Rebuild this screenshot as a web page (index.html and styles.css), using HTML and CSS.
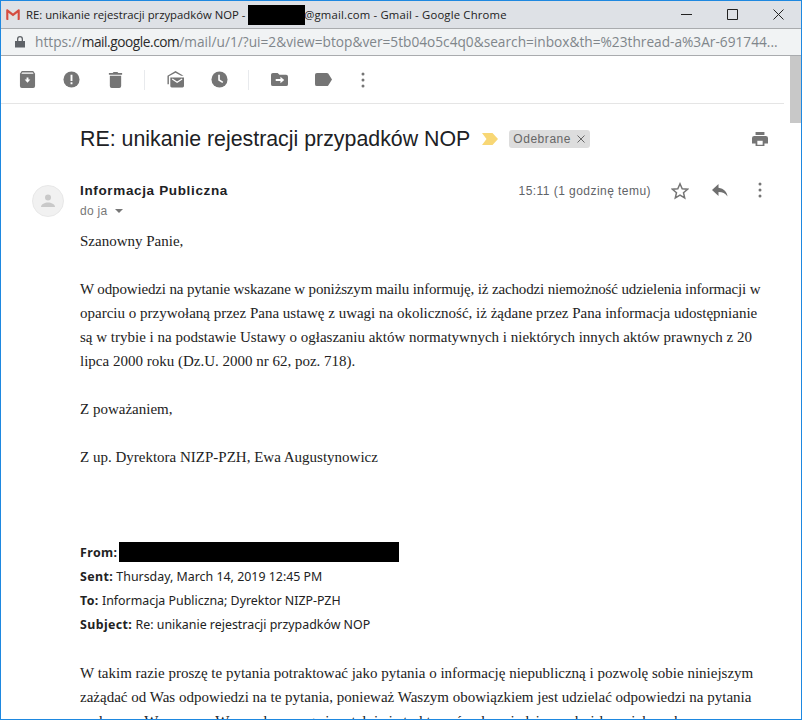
FILE: index.html
```html
<!DOCTYPE html>
<html lang="pl">
<head>
<meta charset="utf-8">
<title>RE: unikanie rejestracji przypadków NOP - Gmail</title>
<link rel="stylesheet" href="styles.css">
</head>
<body>
<div class="window">
  <header class="titlebar">
    <svg class="gmail" width="14" height="11" viewBox="0 0 16 13"><path fill="#e0e0e0" d="M1 2h14v10H1z"/><path fill="#d54c3f" d="M0 1.500C0 .6 1.200 0 2 .6L8 5.200 14 .6c.8-.6 2 0 2 .9V12c0 .6-.4 1-1 1h-1.500V4.500L8 8.700 2.500 4.500V13H1c-.6 0-1-.4-1-1z"/></svg>
    <div class="title"><span>RE: unikanie rejestracji przypadków NOP - </span><span class="redact redact-title"></span><span class="title-rest">@gmail.com - Gmail - Google Chrome</span></div>
    <div class="winbtns">
      <svg width="11" height="11" viewBox="0 0 11 11"><path d="M0 5.500h11" stroke="#222" fill="none"/></svg>
      <svg width="11" height="11" viewBox="0 0 11 11"><path d="M.5.500h10v10H.5z" stroke="#222" fill="none"/></svg>
      <svg width="11" height="11" viewBox="0 0 11 11"><path d="M.5.500l10 10M10.500.500l-10 10" stroke="#222" fill="none"/></svg>
    </div>
  </header>
  <div class="urlbar">
    <svg width="10" height="12" viewBox="0 0 10 12"><path fill="#5f6368" d="M0 5h10v6.500H0zM2 5V3a3 3 0 0 1 6 0v2H6.700V3a1.700 1.700 0 0 0-3.400 0v2z"/></svg>
    <div class="url"><span class="dim">https://</span><span class="host">mail.google.com</span><span class="dim">/mail/u/1/?ui=2&amp;view=btop&amp;ver=5tb04o5c4q0&amp;search=inbox&amp;th=%23thread-a%3Ar-691744...</span></div>
  </div>
  <div class="viewport">
    <main class="page">
      <nav class="toolbar">
        <div class="tbgroup">
          <svg class="ic" viewBox="0 0 18 18"><path d="M1 3l2-3h12l2 3v13a2 2 0 0 1-2 2H3a2 2 0 0 1-2-2z"/><path fill="#fff" d="M2.500 3l1-1.500h11l1 1.500zM6 9h2V7h2v2h2l-3 3.500z"/></svg>
          <svg class="ic" viewBox="0 0 18 18"><circle cx="9" cy="9" r="8.500"/><path fill="#fff" d="M8 4h2v6.500H8zM8 12h2v2H8z"/></svg>
          <svg class="ic" viewBox="0 0 18 18"><path d="M2 2h4l1-1h4l1 1h4v2H2zM3 5h12v11a2 2 0 0 1-2 2H5a2 2 0 0 1-2-2z"/></svg>
        </div>
        <span class="sep"></span>
        <div class="tbgroup tbmail">
          <svg class="ic" viewBox="0 0 18 18"><path d="M9 0l8.500 5H15L9 1.800 2 5.500V14H.5V5z"/><path d="M3.500 7h14.500v9a1.500 1.500 0 0 1-1.500 1.500H5A1.500 1.500 0 0 1 3.500 16z"/><path fill="none" stroke="#fff" stroke-width="1.300" d="M5.500 8.500l5.200 3.400 5.300-3.400"/></svg>
          <svg class="ic" viewBox="0 0 18 18"><circle cx="9" cy="9" r="8.500"/><path fill="none" stroke="#fff" stroke-width="1.700" d="M8.500 4v5.500l4 2.500"/></svg>
        </div>
        <span class="sep"></span>
        <div class="tbgroup tbmove">
          <svg class="ic" viewBox="0 0 18 18"><path d="M2 2h5l2 2h7a2 2 0 0 1 2 2v8a2 2 0 0 1-2 2H2a2 2 0 0 1-2-2V4a2 2 0 0 1 2-2z"/><path fill="#fff" d="M5 8.500h5V6l4 3.500-4 3.500v-2.500H5z"/></svg>
          <svg class="ic" viewBox="0 0 18 14"><path d="M2 0h10.500c.7 0 1.300.3 1.700.9L18 7l-3.800 6.100c-.4.600-1 .9-1.700.9H2a2 2 0 0 1-2-2V2a2 2 0 0 1 2-2z"/></svg>
          <svg class="ic dots" viewBox="0 0 4 16"><circle cx="2" cy="2" r="1.500"/><circle cx="2" cy="8" r="1.500"/><circle cx="2" cy="14" r="1.500"/></svg>
        </div>
      </nav>
      <div class="subject">
        <h1>RE: unikanie rejestracji przypadków NOP</h1>
        <svg class="marker" width="16" height="12" viewBox="0 0 16 12"><path fill="#f8d775" d="M0 0h10.500L16 6l-5.500 6H0l4.500-6z"/></svg>
        <span class="chip">Odebrane<svg class="chipx" width="8" height="8" viewBox="0 0 8 8"><path d="M.5.500l7 7M7.500.500l-7 7" stroke="#666" fill="none"/></svg></span>
        <svg class="ic print" viewBox="0 0 18 18"><path d="M4 1h10v3.500H4zM2.500 5.500h13A2.500 2.500 0 0 1 18 8v6h-4v3H4v-3H0V8a2.500 2.500 0 0 1 2.500-2.500z"/><path fill="#fff" d="M6 11h6v4.500H6z"/></svg>
      </div>
      <section class="message">
        <div class="avatar">
          <svg width="14" height="14" viewBox="0 0 14 14"><circle cx="7" cy="3.500" r="3" fill="#c9c9c9"/><path fill="#c9c9c9" d="M0 13c0-3 4-4.500 7-4.500s7 1.500 7 4.500z"/></svg>
        </div>
        <div class="content">
          <div class="msghead">
            <div class="who">
              <div class="sender">Informacja Publiczna</div>
              <div class="recipient">do ja <span class="caret"></span></div>
            </div>
            <div class="time">15:11 (1 godzinę temu)</div>
            <div class="msgactions">
              <svg class="star" width="18" height="18" viewBox="0 0 18 18"><path fill="none" stroke="#757575" stroke-width="1.500" d="M9 1.800l2.200 4.900 5.300.5-4 3.500 1.200 5.200L9 13.200l-4.700 2.700 1.200-5.200-4-3.500 5.300-.5z"/></svg>
              <svg class="reply" width="16" height="14" viewBox="0 0 16 14"><path fill="#6f6f6f" d="M6.500 3.800V0L0 6l6.500 6V8.100c4 0 7 1.300 9 4.400C15 8 12 4.500 6.500 3.800z"/></svg>
              <svg class="ic dots" viewBox="0 0 4 16"><circle cx="2" cy="2" r="1.500"/><circle cx="2" cy="8" r="1.500"/><circle cx="2" cy="14" r="1.500"/></svg>
            </div>
          </div>
          <div class="body">
            <p>Szanowny Panie,</p>
            <p class="fixed"><span class="tight">W odpowiedzi na pytanie wskazane w poniższym mailu informuję, iż zachodzi niemożność udzielenia informacji w</span><br>oparciu o przywołaną przez Pana ustawę z uwagi na okoliczność, iż żądane przez Pana informacja udostępnianie<br>są w trybie i na podstawie Ustawy o ogłaszaniu aktów normatywnych i niektórych innych aktów prawnych z 20<br>lipca 2000 roku (Dz.U. 2000 nr 62, poz. 718).</p>
            <p>Z poważaniem,</p>
            <p>Z up. Dyrektora NIZP-PZH, Ewa Augustynowicz</p>
            <div class="quotehead">
              <div><b>From:</b> <span class="redact redact-from"></span></div>
              <div><b>Sent:</b> Thursday, March 14, 2019 12:45 PM</div>
              <div><b>To:</b> Informacja Publiczna; Dyrektor NIZP-PZH</div>
              <div><b>Subject:</b> Re: unikanie rejestracji przypadków NOP</div>
            </div>
            <p>W takim razie proszę te pytania potraktować jako pytania o informację niepubliczną i pozwolę sobie niniejszym zażądać od Was odpowiedzi na te pytania, ponieważ Waszym obowiązkiem jest udzielać odpowiedzi na pytania podawane Wam przez Was pod rozwagę i rzetelnie je traktować, odpowiadając na każde z nich osobno.</p>
          </div>
        </div>
      </section>
    </main>
    <div class="scrollbar"><div class="thumb"></div></div>
  </div>
</div>
</body>
</html>
```
FILE: styles.css
```css
html, body { margin: 0; padding: 0; height: 100%; overflow: hidden; background: #fff; }
.window { box-sizing: border-box; width: 802px; height: 720px; border: 1px solid #1e88e0; display: flex; flex-direction: column; overflow: hidden; color: #222; }
.titlebar { height: 27px; flex: none; display: flex; align-items: center; background: #dee1e6; padding-left: 5px; font: 11.300px/16px "Open Sans", "Noto Sans", sans-serif; color: #222; }
.gmail { flex: none; margin-right: 6px; }
.title { flex: 1; display: flex; align-items: center; white-space: pre; }
.title-rest { margin-left: -1px; letter-spacing: .18px; }
.redact { display: inline-block; background: #000; }
.redact-title { width: 57px; height: 20px; }
.winbtns { display: flex; gap: 35px; margin-right: 17px; }
.urlbar { height: 28px; flex: none; box-sizing: border-box; border-top: 1px solid #a9abae; border-bottom: 1px solid #a9abae; background: #f1f3f4; display: flex; align-items: center; padding-left: 14px; gap: 10px; font: 13.700px/18px "Open Sans", "Noto Sans", sans-serif; white-space: nowrap; }
.dim { color: #80868b; }
.host { color: #2b2b2b; letter-spacing: -.45px; }
.viewport { flex: 1; display: flex; min-height: 0; }
.page { flex: 1; min-width: 0; overflow: hidden; }
.scrollbar { flex: none; width: 11px; background: #fff; }
.thumb { height: 67px; background: #c8c8c8; }
.ic { fill: #757575; display: block; width: 17px; height: 17px; flex: none; }
.toolbar { height: 48px; box-sizing: border-box; margin-right: 6px; border-bottom: 1px solid #e5e5e5; display: flex; align-items: center; padding-left: 18px; }
.tbgroup { display: flex; align-items: center; gap: 27px; }
.tbmail { margin-left: 1px; gap: 27px; }
.tbmove { margin-left: 1px; }
.tbmove .dots { margin-left: 2px; }
.sep { width: 1px; height: 20px; background: #e8eaed; margin: 0 21px 0 20px; }
.dots { width: 4px; height: 16px; }
.subject { display: flex; align-items: center; padding: 20px 22px 0 79px; height: 30px; }
h1 { margin: 0; font: 400 21.350px/28px "Liberation Sans", Arial, sans-serif; color: #202124; white-space: nowrap; }
.marker { margin-left: 12px; flex: none; }
.chip { margin-left: 11px; background: #ddd; border-radius: 3px; padding: 0 5px 0 4px; height: 18px; display: flex; align-items: center; gap: 6px; font: 12px/18px "Liberation Sans", Arial, sans-serif; letter-spacing: .55px; color: #666; white-space: nowrap; }
.chipx { flex: none; }
.print { margin-left: auto; width: 16px; height: 16px; }
.message { display: flex; margin-top: 27px; padding-left: 31px; padding-right: 28px; }
.avatar { width: 32px; height: 32px; box-sizing: border-box; border: 1px solid #e8e8e8; border-radius: 50%; background: #f1f1f1; display: flex; align-items: center; justify-content: center; flex: none; margin-top: 4px; }
.content { flex: 1; min-width: 0; margin-left: 16px; }
.msghead { display: flex; height: 42px; }
.who { flex: 1; }
.sender { font: 700 13.500px/20px "Liberation Sans", Arial, sans-serif; letter-spacing: .65px; color: #202124; }
.recipient { font: 12px/20px "Liberation Sans", Arial, sans-serif; letter-spacing: .3px; color: #777; }
.caret { display: inline-block; border: 4px solid transparent; border-top: 4px solid #777; border-bottom: 0; margin-left: 4px; vertical-align: 2px; }
.time { font: 12px/20px "Liberation Sans", Arial, sans-serif; letter-spacing: .45px; color: #5f6368; }
.msgactions { display: flex; align-items: flex-start; margin-left: 20px; width: 91px; padding-top: 1px; }
.star { margin-right: 23px; flex: none; }
.reply { margin: 2px 30px 0 0; flex: none; }
.body { font: 15px/24px "Liberation Serif", "Times New Roman", serif; color: #222; margin-top: 6px; width: 690px; }
.body p { margin: 0 0 24px; }
.body .fixed { white-space: nowrap; }
.tight { letter-spacing: -.15px; }
.quotehead { margin: 72px 0 24px; font: 12.400px/24px "Noto Sans", Tahoma, sans-serif; color: #222; }
.quotehead b { font-weight: 700; letter-spacing: .4px; }
.redact-from { width: 280px; height: 20px; margin-left: -2px; vertical-align: -5px; }
```
